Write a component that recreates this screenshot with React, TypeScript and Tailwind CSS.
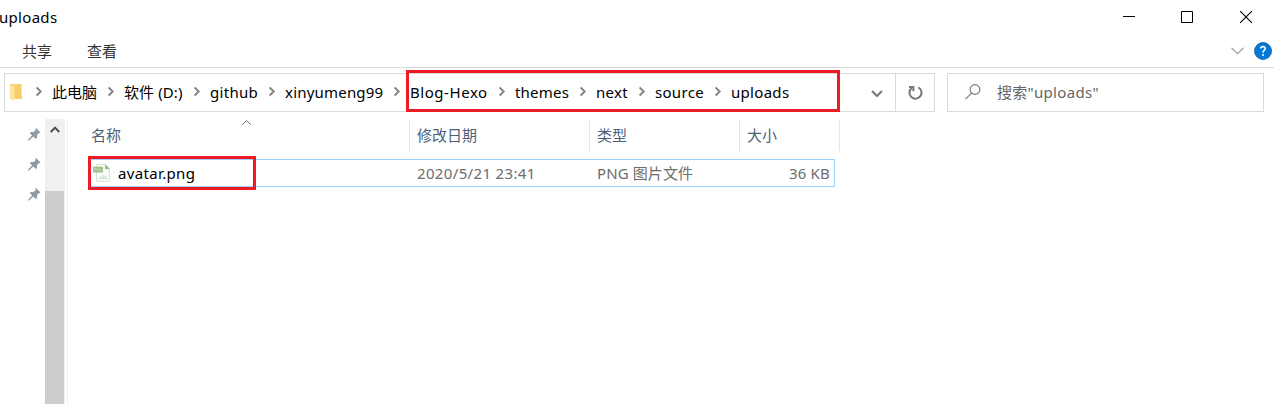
import React from "react";

const crumbs = [
  { label: "此电脑", style: "w-[72px]" },
  { label: "软件 (D:)", style: "w-[86px] tracking-[0.1px]" },
  { label: "github", style: "w-[75px] tracking-[0.3px]" },
  { label: "xinyumeng99", style: "w-[125px] tracking-[0.2px]" },
  { label: "Blog-Hexo", style: "w-[105px] tracking-[0.55px]" },
  { label: "themes", style: "w-[81px] tracking-[0.2px]" },
  { label: "next", style: "w-[59px] tracking-[0.3px]" },
  { label: "source", style: "w-[76px] tracking-[0.3px]" },
  { label: "uploads", style: "w-[100px] tracking-[0.3px]" },
];

function CrumbArrow() {
  return (
    <svg className="block h-[11px] w-4 shrink-0" viewBox="0 0 16 11" fill="none" stroke="#858585" strokeWidth="2">
      <path d="M.6 1.4 4.7 5.5 .6 9.6" />
    </svg>
  );
}

function FolderIcon() {
  return (
    <svg className="block h-[18px] w-3 shrink-0" viewBox="0 0 12 18">
      <path d="M4 1H11.5V13H12V16H4Z" fill="#f5cf6b" />
      <path d="M0 1H4.5L4.5 15 3.5 18 0 15.8Z" fill="#ffe59a" />
      <path d="M0 1H4.5V3H1.5L0 2Z" fill="#f7d67c" />
    </svg>
  );
}

function PinIcon() {
  return (
    <svg className="block h-[13px] w-[13px]" viewBox="0 0 13 13">
      <path d="M8 0 12.6 4.4 11.5 5.3 10.9 5 9 7.2 9.1 9.7 7.9 11 5.2 8.5 1 12.6 0 12.6 0 11.7 4.1 7.5 1.8 5.1 2.9 4 5.6 4 7.7 2 7.2 1.1Z" fill="#8f9aa3" />
    </svg>
  );
}

function PngIcon() {
  return (
    <svg className="block h-[18px] w-[17px]" viewBox="0 0 17 18">
      <path d="M3.5 .5H12L16.4 4.5V17.4H3.5Z" fill="#fbfdfa" stroke="#d5e4cf" />
      <path d="M12 .3V5H16.8Z" fill="#8fbd83" />
      <path d="M5.2 15.3C6 12.3 8.3 13 9 11.5 10.5 9.8 12.2 12.4 13.2 12.2 14.4 12.6 14.8 14 15 15.3Z" fill="#d4e9e1" />
      <rect x="0" y="2.7" width="10" height="5.8" fill="#98bf88" />
      <path d="M1.6 7V4.3H3V5.8H1.6M4.2 7V4.3L6 7V4.3M8.7 4.4H7.3V6.8H8.7V5.8" fill="none" stroke="#c9dfc0" strokeWidth=".6" />
    </svg>
  );
}

export default function App() {
  return (
    <div className="flex h-[404px] w-[1274px] flex-col overflow-hidden bg-white font-['Noto_Sans','Noto_Sans_CJK_SC',sans-serif] text-[15px] leading-5 whitespace-nowrap text-black">
      <header className="flex h-[34px] items-center justify-between">
        <h1 className="-ml-px text-[15px] tracking-[0.3px]">uploads</h1>
        <div className="flex items-center pr-[22px]">
          <svg className="h-3 w-3" viewBox="0 0 12 12"><path d="M0 5.5H12" stroke="#000" /></svg>
          <svg className="ml-[46px] h-3 w-3" viewBox="0 0 12 12"><path d="M.5.5H11.5V11.5H.5Z" fill="none" stroke="#000" /></svg>
          <svg className="ml-[47px] h-3 w-3" viewBox="0 0 12 12"><path d="M0 0 12 12M12 0 0 12" stroke="#000" strokeWidth="1.1" /></svg>
        </div>
      </header>

      <nav className="flex h-[34px] items-center border-b border-[#dadbdc] pl-[22px] text-[#333]">
        <span>共享</span>
        <span className="ml-[35px]">查看</span>
        <svg className="ml-auto h-2 w-[13px]" viewBox="0 0 13 8" fill="none" stroke="#a6a6a6" strokeWidth="1.3"><path d="M.5.8 6.5 6.8 12.5.8" /></svg>
        <svg className="mr-[2px] ml-[10px] h-[18px] w-[18px]" viewBox="0 0 18 18">
          <circle cx="9" cy="9" r="8.5" fill="#0078d7" stroke="#1b5f9e" strokeWidth=".8" />
          <path d="M6.7 6.5C6.8 4 11.4 4 11.3 6.5 11.2 8.2 9 8.2 9 10.7" fill="none" stroke="#fff" strokeWidth="1.6" />
          <circle cx="9" cy="13" r="1" fill="#fff" />
        </svg>
      </nav>

      <div className="flex h-[51px] pt-[5px] pl-1">
        <div className="flex h-[39px] w-[931px] border border-[#d9d9d9]">
          <div className="relative flex flex-1 items-center pb-[2px] pl-[5px]">
            <FolderIcon />
            <div className="ml-[14px] flex items-center">
              <CrumbArrow />
              {crumbs.map((c, i) => (
                <div key={c.label} className={`flex items-center justify-between ${c.style}`}>
                  <span>{c.label}</span>
                  {i < crumbs.length - 1 && <CrumbArrow />}
                </div>
              ))}
            </div>
            <svg className="mt-[4px] mr-3 ml-auto h-2 w-3" viewBox="0 0 12 8" fill="none" stroke="#777" strokeWidth="2"><path d="M1 1 6 6 11 1" /></svg>
            <div className="absolute -top-[4px] left-[401px] h-[42px] w-[434px] border-[3px] border-[#ed1c24]" />
          </div>
          <div className="flex w-[39px] items-center justify-center border-l border-[#d9d9d9]">
            <svg className="h-[15px] w-[15px]" viewBox="0 0 15 15" fill="none" stroke="#777" strokeWidth="2">
              <path d="M10.4 2.4A6 6 0 1 1 3.7 3" />
              <path d="M1 2H5.4V6.2" />
            </svg>
          </div>
        </div>
        <div className="ml-3 flex h-[39px] w-[317px] items-center border border-[#d9d9d9] pb-[2px] pl-[17px] text-[#666]">
          <svg className="h-4 w-4" viewBox="0 0 16 16" fill="none" stroke="#777" strokeWidth="1.1"><circle cx="10" cy="5.5" r="4.9" /><path d="M6.6 9.1.5 15.2" /></svg>
          <span className="ml-[16px] tracking-[0.3px]">搜索"uploads"</span>
        </div>
      </div>

      <main className="flex flex-1">
        <aside className="flex w-[45px] flex-col items-end gap-[17px] pt-[9px] pr-[4px]">
          <PinIcon />
          <PinIcon />
          <PinIcon />
        </aside>
        <div className="flex w-5 flex-col bg-[#f0f0f0]">
          <div className="flex h-[72px] justify-center pt-[7px]">
            <svg className="h-[7px] w-[10px]" viewBox="0 0 10 7" fill="none" stroke="#505050" strokeWidth="2"><path d="M.7 6 5 1.7 9.3 6" /></svg>
          </div>
          <div className="w-[19px] flex-1 bg-[#cdcdcd]" />
        </div>
        <div className="ml-[2px] w-px bg-[#f3f3f3]" />

        <section className="ml-[21px] w-[751px]">
          <div className="flex h-[32px] text-[#4c607a]">
            <div className="relative flex w-[321px] items-center border-r border-[#e5e5e5] pl-[2px]">
              名称
              <svg className="absolute top-[1px] left-[153px] h-[5px] w-[9px]" viewBox="0 0 9 5" fill="none" stroke="#666"><path d="M.3 4.6 4.5.6 8.7 4.6" /></svg>
            </div>
            <div className="flex w-[180px] items-center border-r border-[#e5e5e5] pl-[7px]">修改日期</div>
            <div className="flex w-[150px] items-center border-r border-[#e5e5e5] pl-[7px]">类型</div>
            <div className="flex w-[100px] items-center border-r border-[#e5e5e5] pl-[7px]">大小</div>
          </div>
          <div className="relative mt-[8px] flex h-[28px] w-[746px] items-center border border-[#99d1ff] text-[#6d6d6d]">
            <div className="flex w-[327px] items-center pl-[3px] text-black">
              <PngIcon />
              <span className="ml-[8px] tracking-[0.35px]">avatar.png</span>
            </div>
            <span className="w-[180px] tracking-[0.35px]">2020/5/21 23:41</span>
            <span className="tracking-[0.1px]">PNG 图片文件</span>
            <span className="mr-1 ml-auto tracking-[0.2px]">36 KB</span>
            <div className="absolute -top-[4px] -left-[2px] h-[34px] w-[168px] border-[3px] border-[#ed1c24]" />
          </div>
        </section>
      </main>
    </div>
  );
}
